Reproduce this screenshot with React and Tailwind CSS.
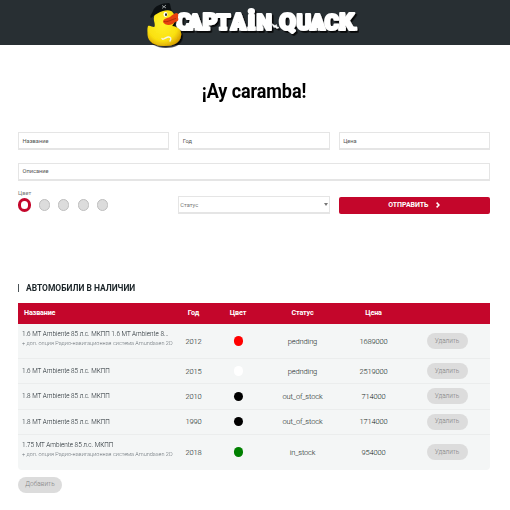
import React from 'react';

const cars = [
  { name: '1.6 МТ Ambiente 85 л.с. МКПП 1.6 МТ Ambiente 8...', option: true, year: 2012, color: 'bg-[#ff0000]', status: 'pednding', price: 1689000, h: 'h-[35px]' },
  { name: '1.6 МТ Ambiente 85 л.с. МКПП', year: 2015, color: 'bg-white', status: 'pednding', price: 2519000, h: 'h-[25px]' },
  { name: '1.8 МТ Ambiente 85 л.с. МКПП', year: 2010, color: 'bg-black', status: 'out_of_stock', price: 714000, h: 'h-[25.5px]' },
  { name: '1.8 МТ Ambiente 85 л.с. МКПП', year: 1990, color: 'bg-black', status: 'out_of_stock', price: 1714000, h: 'h-[25px]' },
  { name: '1.75 МТ Ambiente 85 л.с. МКПП', option: true, year: 2018, color: 'bg-[#008000]', status: 'in_stock', price: 954000, h: 'h-[35px]' },
];

// Foot serifs that turn the grotesque capitals into slab letters.
const feet = [
  [188, 5], [195, 5.5], [201.5, 8.5], [219, 8], [231, 6], [239.5, 6], [247.5, 8], [257, 6], [311, 5.5], [318, 5.5], [338.5, 7], [349, 8],
];

const columns = 'grid grid-cols-[160px_31px_58px_71px_71px_76px] items-center text-center';
const field = 'flex h-[18px] items-center border border-b-2 border-[#e5e5e5] bg-white text-[5.7px] text-[#555]';
const pill = 'flex h-4 items-center justify-center rounded-full bg-[#dcdcdc] pt-px font-light text-[#808080]';

function Logo() {
  return (
    <svg className="block h-12 w-[212px]" viewBox="147 0 212 48" aria-label="Captain Quack">
      <defs>
        <radialGradient id="body" cx="45%" cy="40%" r="65%">
          <stop offset="0" stopColor="#fff22a" />
          <stop offset="0.7" stopColor="#fae010" />
          <stop offset="1" stopColor="#d9a000" />
        </radialGradient>
        <filter id="shadow" x="-10%" y="-20%" width="125%" height="150%">
          <feDropShadow dx="1.6" dy="1.8" stdDeviation="0.6" floodColor="#000" floodOpacity="0.85" />
        </filter>
      </defs>
      <g filter="url(#shadow)" fill="#fff" stroke="#fff" strokeWidth="2.2" strokeLinejoin="round" fontFamily="Roboto, sans-serif" fontWeight="900">
        <text y="29.5" fontSize="23">
          <tspan x="176" fontSize="24">C</tspan>
          <tspan x="187.5" fontSize="22">A</tspan>
          <tspan x="202.5">P</tspan>
          <tspan x="216.5" fontSize="22">T</tspan>
          <tspan x="230.5">A</tspan>
          <tspan x="247.5" fontSize="28">i</tspan>
          <tspan x="256.5" fontSize="22">N</tspan>
        </text>
        <text y="29.5" fontSize="22">
          <tspan x="279" fontSize="24.5">Q</tspan>
          <tspan x="296.5">U</tspan>
          <tspan x="310">A</tspan>
          <tspan x="324.5">C</tspan>
          <tspan x="339" fontSize="23.5">K</tspan>
        </text>
        {feet.map(([x, width]) => (
          <rect key={x} x={x} y="26.9" width={width} height="3.5" strokeWidth="0.6" />
        ))}
        <path d="m272 24 3 1.5 1.5-1 .5 2.5 2 .5-2 1-2-1.5-1 .5Z" strokeWidth="0.4" />
      </g>
      <g filter="url(#shadow)">
        <path d="M148 26c2-1 4 1 6 1 1 0 1-3 0-6-1-7 3-12 10-12 7 0 11 4 11 10 0 3-2 5-3 7 7 1 10 5 9 10-1 7-8 10-17 10s-16-4-16.500-11c0-4-.5-6 .5-9Z" fill="url(#body)" />
      </g>
      <path d="M163 22c0-3 4-4 7-5 2-2 5-4 7-4 2 1 1 3 1 5 1 1 0 4-3 4-3 4-10 4-12 0Z" fill="#e8430f" />
      <path d="M164 21.5c4 1 7-2 12-3" fill="none" stroke="#a32a08" strokeWidth="0.8" />
      <ellipse cx="165.500" cy="14.5" rx="2" ry="2.4" fill="#fff" />
      <ellipse cx="166" cy="14.7" rx="0.9" ry="1.4" fill="#111" />
      <path d="M151 18c-2-2 1-4 2-7 1-5 9-8 16-8 2 1 1 4 3 8-3-1-6-1-9 0-4 1-7 3-12 7Z" fill="#0c1013" />
      <path d="m162 5.5 4 2.5m-4 .5 4-3.5" stroke="#c9ced0" strokeWidth="0.7" />
      <path d="M162 38.5c1 2 3-1 6-1.500 3-.5 3.500 2 2 4" fill="none" stroke="#f6f4e6" strokeWidth="1.4" strokeLinecap="round" />
    </svg>
  );
}

function Swatches() {
  return (
    <div className="flex h-[25.5px] flex-col">
      <div className="h-[9px] text-[5.7px] leading-[8px] text-[#777]">Цвет</div>
      <div className="flex items-center gap-[8.5px]">
        <span className="-mr-px h-[14px] w-[13px] rounded-full border-[3px] border-[#c4062b] bg-white" />
        {[0, 1, 2, 3].map((i) => (
          <span key={i} className="h-3 w-[11px] rounded-full border border-[#bebebe] bg-[#dcdcdc]" />
        ))}
      </div>
    </div>
  );
}

export default function App() {
  return (
    <div className="h-[510px] w-[510px] overflow-hidden bg-white font-['Roboto',sans-serif] text-black">
      <header className="flex h-[45px] items-start bg-[#282f33] pl-[147px]">
        <Logo />
      </header>
      <main className="pr-5 pl-[18px]">
        <h1 className="mt-[35px] scale-x-[0.925] text-center text-[19.5px] leading-6 font-bold tracking-[-0.1px]">¡Ay caramba!</h1>

        <form className="mt-7">
          <div className="grid grid-cols-3 gap-[9px]">
            <div className={`${field} pt-px pl-[3.5px]`}>Название</div>
            <div className={`${field} pt-px pl-[3.5px]`}>Год</div>
            <div className={`${field} pt-px pl-[3.5px]`}>Цена</div>
          </div>
          <div className={`${field} mt-[13px] pl-[3.5px]`}>Описание</div>
          <div className="mt-[7.5px] grid grid-cols-3 items-end gap-[9px]">
            <Swatches />
            <div className={`${field} justify-between px-px`}>
              <span className="pt-px text-[#777]">Статус</span>
              <span className="h-0 w-0 border-x-[2px] border-t-[3px] border-x-transparent border-t-[#777]" />
            </div>
            <div className="flex h-[17.5px] items-center justify-center rounded-[2px] bg-[#c4062b] text-[7px] font-bold text-white">
              <span className="tracking-[-0.06px]">ОТПРАВИТЬ</span>
              <svg className="ml-2 h-[6px] w-1" viewBox="0 0 4 6" fill="none" stroke="#fff" strokeWidth="1.5">
                <path d="m.6.6 2.4 2.4L.6 5.4" />
              </svg>
            </div>
          </div>
        </form>

        <h2 className="mt-[69px] flex h-[10px] items-center text-[9px] font-bold text-[#1c2529]">
          <span className="mr-[6.5px] h-2 w-px bg-[#4b5357]" />
          <span className="origin-left scale-x-[0.94] pt-px">АВТОМОБИЛИ В НАЛИЧИИ</span>
        </h2>

        <section className="mt-[10px] overflow-hidden rounded-b-[4px] bg-[#f4f6f6]">
          <div className={`${columns} h-[21px] bg-[#c4062b] text-[7.2px] font-bold tracking-[-0.15px] text-white`}>
            <span className="pl-[6px] text-left">Название</span>
            <span>Год</span>
            <span>Цвет</span>
            <span>Статус</span>
            <span>Цена</span>
          </div>
          {cars.map((car, i) => (
            <div key={i} className={`${columns} ${car.h} border-b border-[#ebeded] text-[7.5px] font-light tracking-[-0.15px] text-[#101a20] last:border-0`}>
              <div className={`pl-1 text-left tracking-normal whitespace-nowrap ${car.option ? 'pb-[5px]' : 'pt-px'}`}>
                <div className="origin-left scale-x-[0.91] text-[7px] leading-[9px]">{car.name}</div>
                {car.option && (
                  <div className="origin-left scale-x-[0.92] text-[6px] leading-[8px] text-[#697177]">+ доп. опция Радио-навигационная система Amundasen 2D</div>
                )}
              </div>
              <span className="pt-px">{car.year}</span>
              <span className={`mx-auto h-[9.5px] w-[9px] rounded-full ${car.color}`} />
              <span className="pt-px">{car.status}</span>
              <span className="pt-px">{car.price}</span>
              <div className={`${pill} mx-auto w-[41px] text-[6.5px] tracking-[-0.05px]`}>Удалить</div>
            </div>
          ))}
        </section>
        <div className={`${pill} mt-[7px] w-11 text-[6.5px]`}>Добавить</div>
      </main>
    </div>
  );
}
